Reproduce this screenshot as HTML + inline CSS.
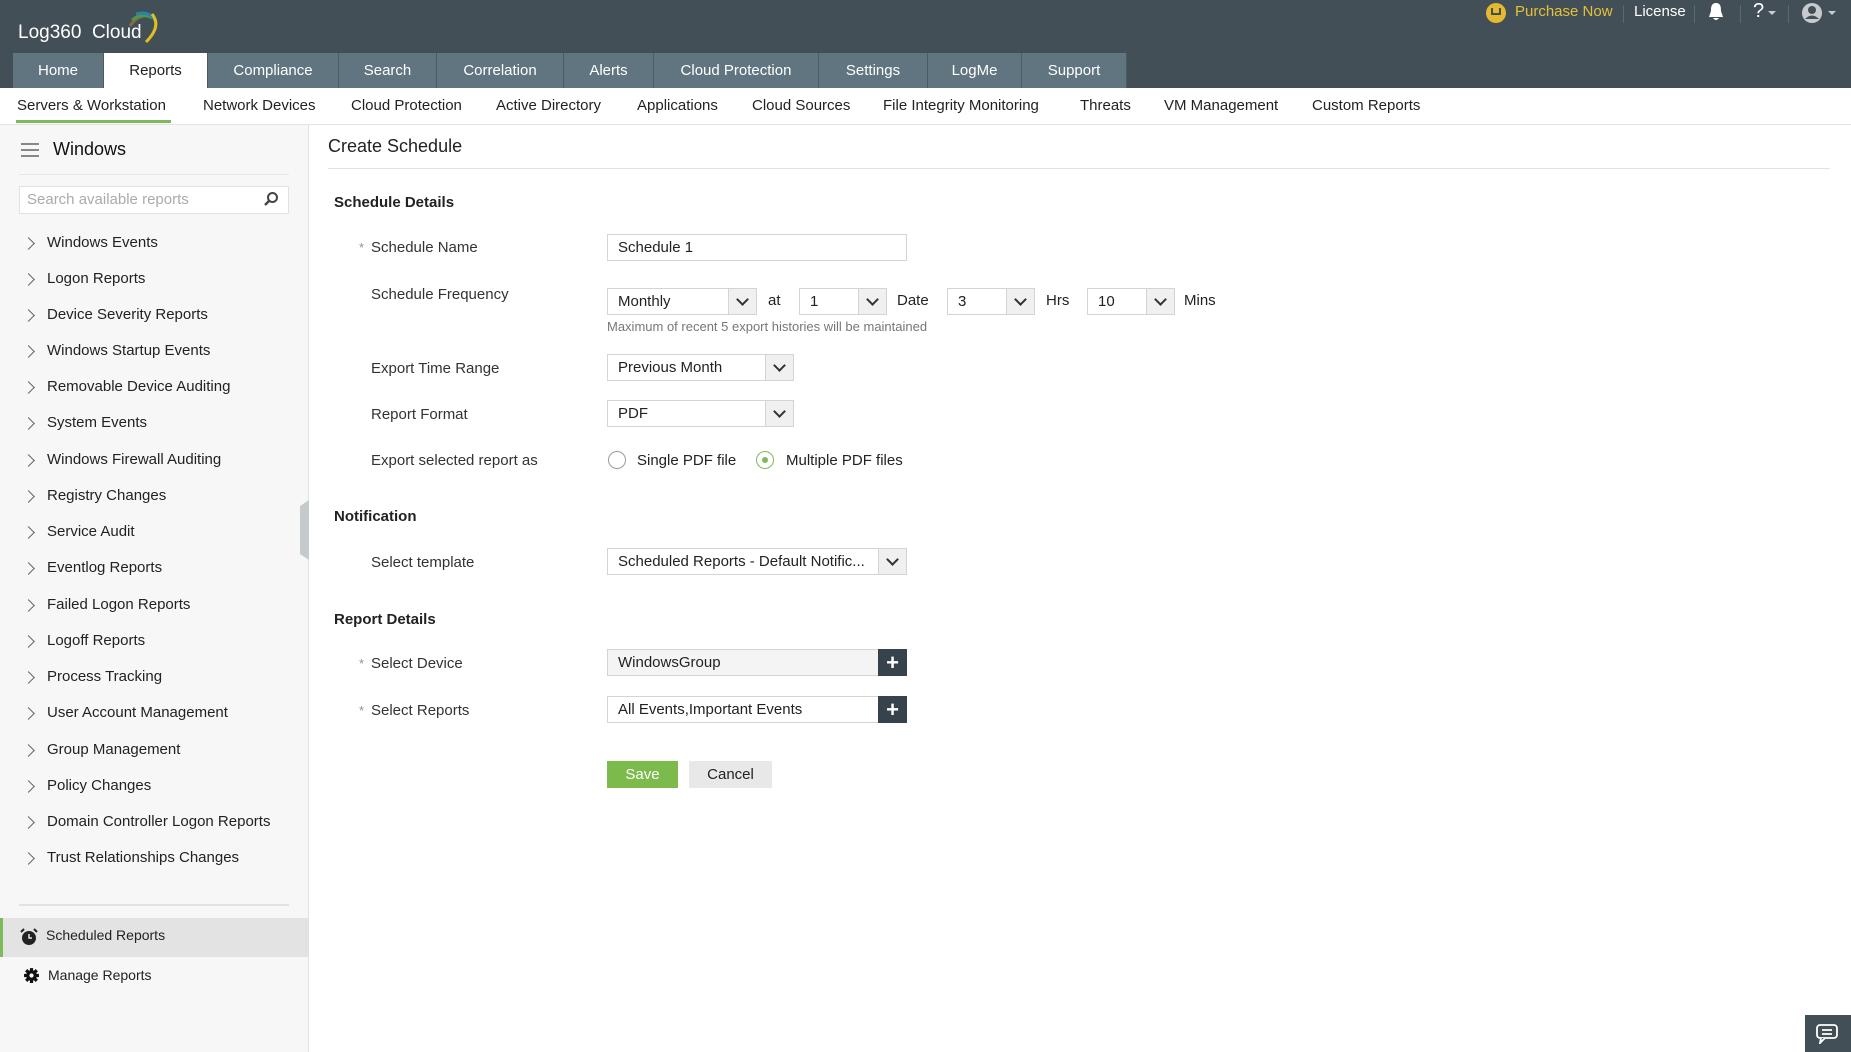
<!DOCTYPE html>
<html><head><meta charset="utf-8"><style>
*{margin:0;padding:0;box-sizing:border-box}
body{width:1851px;height:1052px;overflow:hidden;background:#fff;font-family:"Liberation Sans",Arial,sans-serif;color:#222;position:relative}
.a{position:absolute;white-space:nowrap}
#top{position:absolute;left:0;top:0;width:1851px;height:88px;background:#434f57}
.tab{position:absolute;top:53px;height:35px;background:#607580;color:#fff;font-size:15px;line-height:35px;text-align:center;border-right:1px solid #4b5b64}
.tab.on{background:#fff;color:#222}
.sub{position:absolute;top:97px;font-size:15px;color:#222}
#side{position:absolute;left:0;top:125px;width:309px;height:927px;background:#f7f7f7;border-right:1px solid #e2e2e2}
.it{position:absolute;left:47px;font-size:15px;color:#222}
.chev{position:absolute;left:24px;width:9px;height:9px;border-top:1.5px solid #666;border-right:1.5px solid #666;transform:rotate(45deg)}
.lbl{position:absolute;left:371px;font-size:15px;color:#333}
.sec{position:absolute;left:334px;font-size:15px;font-weight:bold;color:#222}
.box{position:absolute;height:27px;border:1px solid #d4d4d4;background:#fff;font-size:15px;line-height:25px;padding-left:10px;color:#222}
.dd{position:absolute;right:0;top:0;width:28px;height:25px;background:#f0f0f0;border-left:1px solid #d4d4d4}
.dd:after{content:"";position:absolute;left:9px;top:6px;width:7px;height:7px;border-right:2px solid #333;border-bottom:2px solid #333;transform:rotate(45deg)}
.star{color:#a88;font-size:13px;position:absolute}
.plus{position:absolute;right:-1px;top:-1px;width:29px;height:27px;background:#37434c;color:#fff;font-size:22px;font-weight:bold;text-align:center;line-height:27px}
</style></head><body>
<div id="top"></div>
<div class="a" style="left:18px;top:22px;color:#fff;font-size:19px">Log360&nbsp; Cloud</div>
<svg class="a" style="left:122px;top:6px" width="40" height="40" viewBox="0 0 40 40"><path d="M8 20 Q16 8 28 10" stroke="#8a6a3c" stroke-width="3" fill="none"/><path d="M10 14 Q20 6 30 12" stroke="#4a9a4a" stroke-width="3" fill="none"/><path d="M14 8 Q28 4 34 16" stroke="#2a80b0" stroke-width="3" fill="none"/><path d="M30 8 Q40 20 24 36" stroke="#e0c020" stroke-width="3" fill="none"/></svg>
<div class="a" style="left:1486px;top:3px;width:20px;height:20px;border-radius:50%;background:#e5b92e"></div>
<div class="a" style="left:1491px;top:8px;width:10px;height:7px;border:2px solid #434f57;border-top:none"></div>
<div class="a" style="left:1515px;top:3px;color:#e5c036;font-size:15px">Purchase Now</div>
<div class="a" style="left:1623px;top:5px;width:1px;height:18px;background:#5c6870"></div>
<div class="a" style="left:1634px;top:3px;color:#fff;font-size:15px">License</div>
<div class="a" style="left:1694px;top:5px;width:1px;height:18px;background:#5c6870"></div>
<svg class="a" style="left:1707px;top:2px" width="18" height="20" viewBox="0 0 18 20"><path d="M9 1 C4 1 4 6 4 9 L2 15 H16 L14 9 C14 6 14 1 9 1Z M6 16 H12 Q9 20 6 16Z" fill="#fff"/></svg>
<div class="a" style="left:1740px;top:5px;width:1px;height:18px;background:#5c6870"></div>
<div class="a" style="left:1753px;top:0px;color:#fff;font-size:20px">?</div>
<div class="a" style="left:1768px;top:11px;border:4px solid transparent;border-top:4px solid #ccc"></div>
<div class="a" style="left:1788px;top:5px;width:1px;height:18px;background:#5c6870"></div>
<svg class="a" style="left:1801px;top:2px" width="22" height="22" viewBox="0 0 22 22"><circle cx="11" cy="11" r="10" fill="#c7cbce"/><circle cx="11" cy="8" r="4" fill="#434f57"/><path d="M4 17 Q11 10 18 17" fill="#434f57"/></svg>
<div class="a" style="left:1828px;top:11px;border:4px solid transparent;border-top:4px solid #ccc"></div>

<div class="tab" style="left:13px;width:91px">Home</div>
<div class="tab on" style="left:104px;width:104px">Reports</div>
<div class="tab" style="left:208px;width:131px">Compliance</div>
<div class="tab" style="left:339px;width:98px">Search</div>
<div class="tab" style="left:437px;width:127px">Correlation</div>
<div class="tab" style="left:564px;width:90px">Alerts</div>
<div class="tab" style="left:654px;width:165px">Cloud Protection</div>
<div class="tab" style="left:819px;width:109px">Settings</div>
<div class="tab" style="left:928px;width:94px">LogMe</div>
<div class="tab" style="left:1022px;width:105px">Support</div>

<div class="sub" style="left:17px">Servers &amp; Workstation</div>
<div class="a" style="left:16px;top:120px;width:155px;height:3px;background:#7cba5a"></div>
<div class="sub" style="left:203px">Network Devices</div>
<div class="sub" style="left:351px">Cloud Protection</div>
<div class="sub" style="left:496px">Active Directory</div>
<div class="sub" style="left:637px">Applications</div>
<div class="sub" style="left:752px">Cloud Sources</div>
<div class="sub" style="left:883px">File Integrity Monitoring</div>
<div class="sub" style="left:1080px">Threats</div>
<div class="sub" style="left:1164px">VM Management</div>
<div class="sub" style="left:1312px">Custom Reports</div>
<div class="a" style="left:0;top:124px;width:1851px;height:1px;background:#e4e4e4"></div>

<div id="side"></div>
<div class="a" style="left:21px;top:143px;width:18px;height:2px;background:#888;box-shadow:0 6px 0 #888,0 12px 0 #888"></div>
<div class="a" style="left:53px;top:139px;font-size:18px;color:#111">Windows</div>
<div class="a" style="left:19px;top:174px;width:270px;height:1px;background:#e6e6e6"></div>
<div class="a" style="left:19px;top:186px;width:270px;height:28px;background:#fff;border:1px solid #e2e2e2;font-size:15px;color:#aaa;line-height:26px;padding-left:7px">Search available reports</div>
<svg class="a" style="left:263px;top:191px" width="16" height="16" viewBox="0 0 16 16"><circle cx="9.5" cy="6.5" r="4.5" stroke="#444" stroke-width="2" fill="none"/><path d="M6 10 L2 14" stroke="#444" stroke-width="2.5"/></svg>

<div class="it" style="top:234px">Windows Events</div>
<div class="it" style="top:270px">Logon Reports</div>
<div class="it" style="top:306px">Device Severity Reports</div>
<div class="it" style="top:342px">Windows Startup Events</div>
<div class="it" style="top:378px">Removable Device Auditing</div>
<div class="it" style="top:414px">System Events</div>
<div class="it" style="top:451px">Windows Firewall Auditing</div>
<div class="it" style="top:487px">Registry Changes</div>
<div class="it" style="top:523px">Service Audit</div>
<div class="it" style="top:559px">Eventlog Reports</div>
<div class="it" style="top:596px">Failed Logon Reports</div>
<div class="it" style="top:632px">Logoff Reports</div>
<div class="it" style="top:668px">Process Tracking</div>
<div class="it" style="top:704px">User Account Management</div>
<div class="it" style="top:741px">Group Management</div>
<div class="it" style="top:777px">Policy Changes</div>
<div class="it" style="top:813px">Domain Controller Logon Reports</div>
<div class="it" style="top:849px">Trust Relationships Changes</div>
<div class="chev" style="top:239px"></div><div class="chev" style="top:275px"></div><div class="chev" style="top:311px"></div><div class="chev" style="top:347px"></div><div class="chev" style="top:383px"></div><div class="chev" style="top:419px"></div><div class="chev" style="top:456px"></div><div class="chev" style="top:492px"></div><div class="chev" style="top:528px"></div><div class="chev" style="top:564px"></div><div class="chev" style="top:601px"></div><div class="chev" style="top:637px"></div><div class="chev" style="top:673px"></div><div class="chev" style="top:709px"></div><div class="chev" style="top:746px"></div><div class="chev" style="top:782px"></div><div class="chev" style="top:818px"></div><div class="chev" style="top:854px"></div>

<div class="a" style="left:19px;top:904px;width:270px;height:2px;background:#e2e2e2"></div>
<div class="a" style="left:0;top:918px;width:308px;height:39px;background:#e3e3e3;border-left:3px solid #7cba5a"></div>
<svg class="a" style="left:20px;top:927px" width="18" height="20" viewBox="0 0 18 20"><circle cx="9" cy="11" r="7" fill="#222"/><path d="M9 7 V11 H12" stroke="#e3e3e3" stroke-width="1.5" fill="none"/><path d="M1 5 L4 2 M17 5 L14 2" stroke="#222" stroke-width="2"/></svg>
<div class="a" style="left:46px;top:927px;font-size:14px;color:#222">Scheduled Reports</div>
<svg class="a" style="left:23px;top:967px" width="17" height="17" viewBox="0 0 16 16"><circle cx="8" cy="8" r="5" fill="#111"/><circle cx="8" cy="8" r="2" fill="#f7f7f7"/><g stroke="#111" stroke-width="3"><path d="M8 1V15M1 8H15M3 3L13 13M13 3L3 13"/></g><circle cx="8" cy="8" r="2" fill="#f7f7f7"/></svg>
<div class="a" style="left:48px;top:967px;font-size:14px;color:#222">Manage Reports</div>
<div class="a" style="left:300px;top:500px;width:9px;height:60px;background:#c5cacd;clip-path:polygon(100% 0,100% 100%,0 90%,0 10%)"></div>

<div class="a" style="left:328px;top:136px;font-size:18px;color:#222">Create Schedule</div>
<div class="a" style="left:328px;top:168px;width:1502px;height:1px;background:#e2e2e2"></div>

<div class="sec" style="top:194px">Schedule Details</div>
<span class="star" style="left:359px;top:240px">*</span>
<div class="lbl" style="top:239px">Schedule Name</div>
<div class="box" style="left:607px;top:234px;width:300px">Schedule 1</div>
<div class="lbl" style="top:286px">Schedule Frequency</div>
<div class="box" style="left:607px;top:288px;width:150px">Monthly<div class="dd"></div></div>
<div class="a" style="left:768px;top:292px;font-size:15px">at</div>
<div class="box" style="left:799px;top:288px;width:88px">1<div class="dd"></div></div>
<div class="a" style="left:897px;top:292px;font-size:15px">Date</div>
<div class="box" style="left:947px;top:288px;width:88px">3<div class="dd"></div></div>
<div class="a" style="left:1046px;top:292px;font-size:15px">Hrs</div>
<div class="box" style="left:1087px;top:288px;width:88px">10<div class="dd"></div></div>
<div class="a" style="left:1184px;top:292px;font-size:15px">Mins</div>
<div class="a" style="left:607px;top:319px;font-size:13px;color:#777">Maximum of recent 5 export histories will be maintained</div>
<div class="lbl" style="top:360px">Export Time Range</div>
<div class="box" style="left:607px;top:354px;width:187px">Previous Month<div class="dd"></div></div>
<div class="lbl" style="top:406px">Report Format</div>
<div class="box" style="left:607px;top:400px;width:187px">PDF<div class="dd"></div></div>
<div class="lbl" style="top:452px">Export selected report as</div>
<div class="a" style="left:608px;top:451px;width:18px;height:18px;border-radius:50%;border:1.5px solid #999;background:#fff"></div>
<div class="a" style="left:637px;top:452px;font-size:15px">Single PDF file</div>
<div class="a" style="left:756px;top:451px;width:18px;height:18px;border-radius:50%;border:1.5px solid #7cba5a;background:#fff"></div>
<div class="a" style="left:762px;top:457px;width:6px;height:6px;border-radius:50%;background:#7cba5a"></div>
<div class="a" style="left:786px;top:452px;font-size:15px">Multiple PDF files</div>

<div class="sec" style="top:508px">Notification</div>
<div class="lbl" style="top:554px">Select template</div>
<div class="box" style="left:607px;top:548px;width:300px">Scheduled Reports - Default Notific...<div class="dd"></div></div>

<div class="sec" style="top:611px">Report Details</div>
<span class="star" style="left:359px;top:656px">*</span>
<div class="lbl" style="top:655px">Select Device</div>
<div class="box" style="left:607px;top:649px;width:300px;background:#f4f4f4">WindowsGroup<div class="plus">+</div></div>
<span class="star" style="left:359px;top:703px">*</span>
<div class="lbl" style="top:702px">Select Reports</div>
<div class="box" style="left:607px;top:696px;width:300px">All Events,Important Events<div class="plus">+</div></div>

<div class="a" style="left:607px;top:761px;width:71px;height:27px;background:#7cba4c;color:#fff;font-size:15px;text-align:center;line-height:27px">Save</div>
<div class="a" style="left:689px;top:761px;width:83px;height:27px;background:#e8e8e8;color:#222;font-size:15px;text-align:center;line-height:27px">Cancel</div>

<div class="a" style="left:1805px;top:1015px;width:46px;height:37px;background:#434f57"></div>
<svg class="a" style="left:1816px;top:1024px" width="22" height="20" viewBox="0 0 22 20"><rect x="1" y="1" width="20" height="13" rx="3" stroke="#fff" stroke-width="1.8" fill="none"/><path d="M5 14 L4 19 L9 14" stroke="#fff" stroke-width="1.8" fill="#434f57"/><path d="M6 6H16M6 10H16" stroke="#fff" stroke-width="1.8"/></svg>
</body></html>
